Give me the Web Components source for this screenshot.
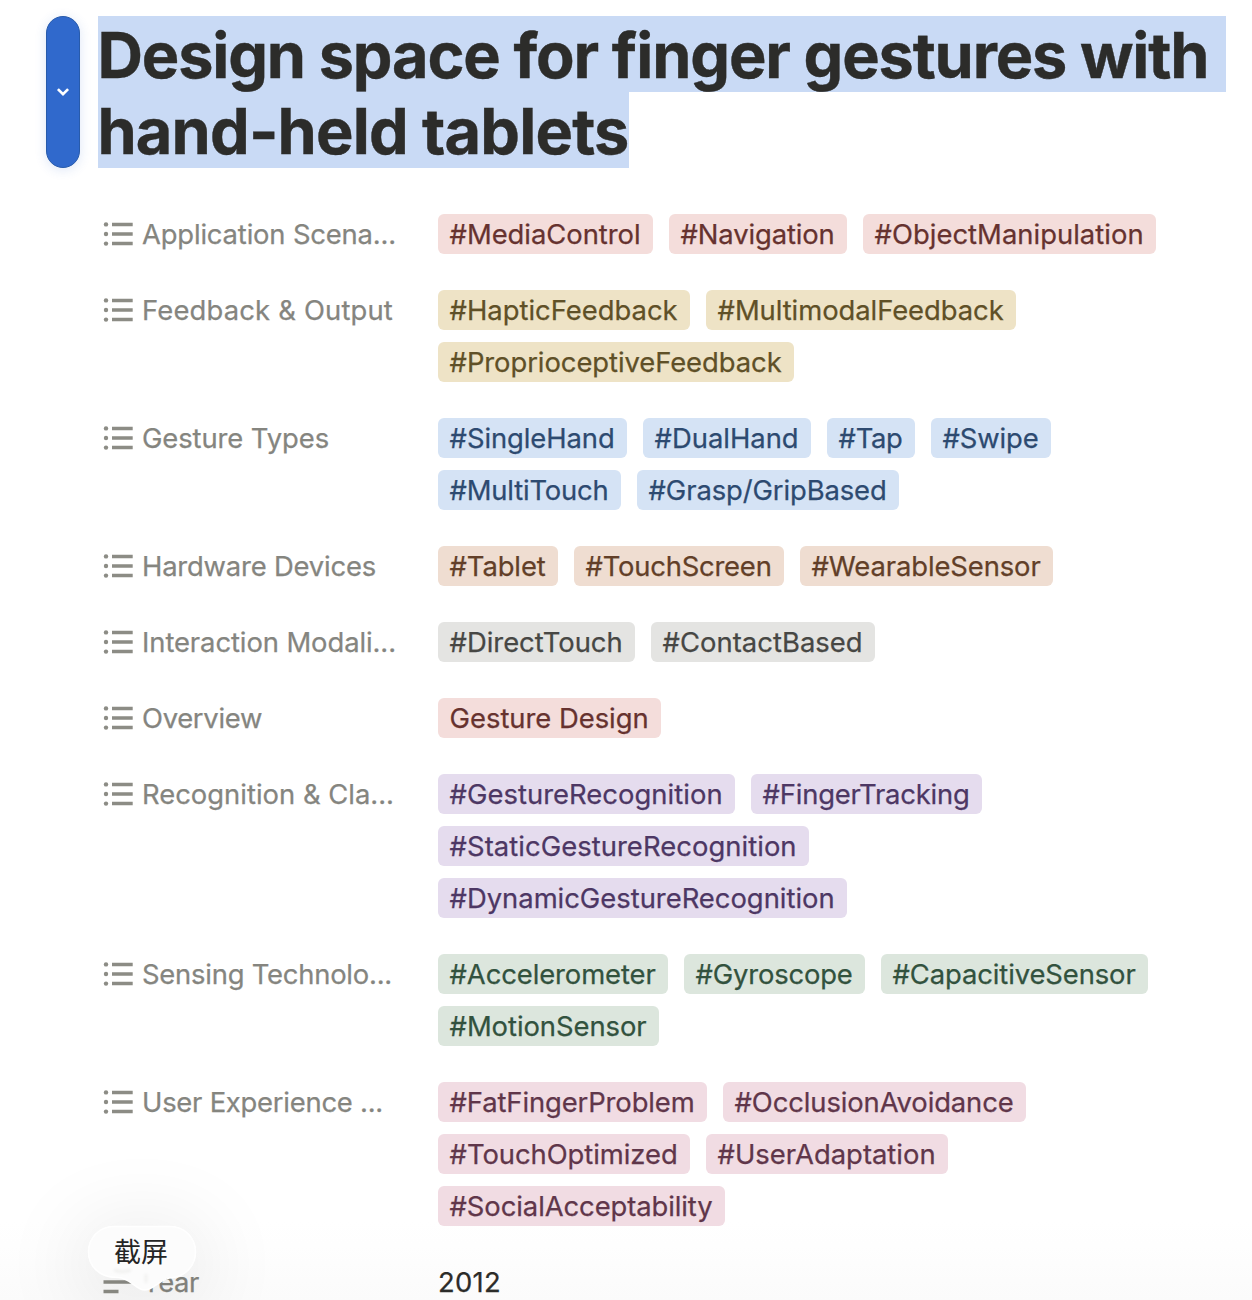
<!DOCTYPE html>
<html lang="en">
<head>
<meta charset="utf-8">
<title>Design space for finger gestures with hand-held tablets</title>
<style>
html,body{margin:0;height:1300px;overflow:hidden;background:#fff;font-family:Inter,"Noto Sans CJK SC",sans-serif}
</style>
</head>
<body>
<note-page></note-page>
<script>
// Distributes letter spacing so that a text run occupies its design width.
function fit(el, target){
  el.style.letterSpacing = '0px';
  const natural = el.getBoundingClientRect().width;
  el.style.letterSpacing = ((target - natural) / el.textContent.length) + 'px';
}
customElements.define('fit-text', class extends HTMLElement{
  connectedCallback(){
    const r = this.attachShadow({mode:'open'});
    r.innerHTML = `<style>:host{display:inline-block;white-space:pre}span{display:inline-block;font-kerning:normal}</style><span></span>`;
    const s = r.querySelector('span');
    s.textContent = this.getAttribute('text');
    fit(s, +this.getAttribute('width'));
  }
});
customElements.define('page-title', class extends HTMLElement{
  connectedCallback(){
    this.attachShadow({mode:'open'}).innerHTML = `<style>
:host{display:flex;gap:18px;height:152px}
.handle{box-sizing:border-box;width:34px;height:152px;border-radius:17px;background:#3069cc;border:1px solid #285bab;display:flex;align-items:center;justify-content:center;box-shadow:0 2px 12px rgba(48,105,204,.16)}
h1{margin:0;font-weight:700;font-size:63px;line-height:76px;color:#2c2c2a;-webkit-text-stroke:.4px;display:flex;flex-direction:column;align-items:flex-start}
.l{height:76px;background:#c9daf5;display:flex}
.l:first-child{width:1128px}.l:last-child{width:531px}
fit-text{height:76px;padding-top:1px;margin-left:-.6px;box-sizing:border-box}
</style><div class="handle"><svg width="14" height="10" viewBox="0 0 14 10"><path d="M1.900 2.100 7 7.100l5.100-5" fill="none" stroke="#fff" stroke-width="2.700"/></svg></div>
<h1><div class="l"><fit-text text="Design space for finger gestures with" width="1111"></fit-text></div><div class="l"><fit-text text="hand-held tablets" width="531"></fit-text></div></h1>`;
  }
});
customElements.define('note-tag', class extends HTMLElement{
  connectedCallback(){
    const w = +this.getAttribute('width');
    this.attachShadow({mode:'open'}).innerHTML = `<style>
:host{display:block;box-sizing:border-box;height:40px;padding:0 12px;border-radius:6px;line-height:40px;font-size:27.4px;width:${w}px}
fit-text{margin-left:-.4px}
</style><fit-text text="${this.getAttribute('text')}" width="${w-24}"></fit-text>`;
  }
});
customElements.define('property-row', class extends HTMLElement{
  connectedCallback(){
    const year = this.hasAttribute('plain');
    const icon = year
      ? '<path d="M-.5 13h29.200M-.5 22.600h15"/>'
      : '<path d="M8 3.400h20.700M8 13h20.700M8 22.600h20.700"/><g fill="#8c8c85" stroke="none"><circle cx="2" cy="3.400" r="2.200"/><circle cx="2" cy="13" r="2.200"/><circle cx="2" cy="22.600" r="2.200"/></g>';
    this.attachShadow({mode:'open'}).innerHTML = `<style>
:host{display:flex;align-items:flex-start;font-size:27.4px;font-weight:400;-webkit-text-stroke:.25px;line-height:40px}
.name{display:flex;align-items:center;width:334px;height:40px;color:#85857f;flex:none}
svg{width:30px;height:26px;margin-right:8px;flex:none;overflow:visible}
.values{display:flex;flex-wrap:wrap;gap:12px 16px;width:788px;color:#2c2c2a}
</style><div class="name"><svg viewBox="0 0 30 26" fill="none" stroke="#8c8c85" stroke-width="3.500">${icon}</svg><fit-text text="${this.getAttribute('name').replace('&','&amp;')}" width="${this.getAttribute('width')}"></fit-text></div><div class="values"><slot></slot></div>`;
  }
});
customElements.define('speech-tip', class extends HTMLElement{
  connectedCallback(){
    this.attachShadow({mode:'open'}).innerHTML = `<style>
:host{position:absolute;left:0;top:1110px;width:330px;height:190px;overflow:hidden}
.glow{position:absolute;left:88px;top:116px;width:108px;height:52px;border-radius:26px;box-shadow:0 12px 84px 14px rgba(0,0,0,.085)}
svg{position:absolute;left:80px;top:110px}
span{position:absolute;left:114px;top:121px;font:27px/40px "Noto Sans CJK SC",sans-serif;color:#252525}
</style><div class="glow"></div><svg width="130" height="80" viewBox="0 0 130 80"><defs><filter id="soft" x="-50%" y="-100%" width="200%" height="300%"><feGaussianBlur stdDeviation="1.600"/></filter></defs><path d="M34 6.500H90C105 6.500 115.500 18 115.500 32C115.500 45 106 56 93 57.500C80 58 74 70 64.500 70C56 70 51 58 38 57.500C19 57.500 8.500 46 8.500 32C8.500 18 19 6.500 34 6.500Z" fill="#fcfcfc" stroke="#fff" stroke-width="1.500"/><g filter="url(#soft)" fill="none" stroke="#efefed" stroke-width="2.500"><path d="M34 50q8 3 17 0M66 54v9"/></g></svg><span>截屏</span>`;
  }
});
const rows = [
 ['Application Scena...',254,'#f4dddb','#66322f',[['#MediaControl',215],['#Navigation',178],['#ObjectManipulation',293]]],
 ['Feedback & Output',251,'#eee3c6','#5f5027',[['#HapticFeedback',252],['#MultimodalFeedback',310],['#ProprioceptiveFeedback',356]]],
 ['Gesture Types',187,'#d5e3f5','#2d4a70',[['#SingleHand',189],['#DualHand',168],['#Tap',88],['#Swipe',120],['#MultiTouch',183],['#Grasp/GripBased',262]]],
 ['Hardware Devices',234,'#efddd1','#623f28',[['#Tablet',120],['#TouchScreen',210],['#WearableSensor',253]]],
 ['Interaction Modali...',254,'#e4e4e2','#474744',[['#DirectTouch',197],['#ContactBased',224]]],
 ['Overview',120,'#f4dddb','#66322f',[['Gesture Design',223]]],
 ['Recognition & Cla...',252,'#e5dcee','#4d3764',[['#GestureRecognition',297],['#FingerTracking',231],['#StaticGestureRecognition',371],['#DynamicGestureRecognition',409]]],
 ['Sensing Technolo...',250,'#dce6dd','#32523e',[['#Accelerometer',230],['#Gyroscope',181],['#CapacitiveSensor',267],['#MotionSensor',221]]],
 ['User Experience ...',241,'#f1dce3','#60364a',[['#FatFingerProblem',269],['#OcclusionAvoidance',303],['#TouchOptimized',252],['#UserAdaptation',242],['#SocialAcceptability',287]]]
];
customElements.define('note-page', class extends HTMLElement{
  connectedCallback(){
    const body = rows.map(([n,w,bg,fg,tags]) => `<property-row name="${n.replace('&','&amp;')}" width="${w}">${tags.map(([t,tw]) => `<note-tag style="background:${bg};color:${fg}" text="${t}" width="${tw}"></note-tag>`).join('')}</property-row>`).join('');
    this.attachShadow({mode:'open'}).innerHTML = `<style>
:host{display:block;box-sizing:border-box;position:relative;width:1252px;height:1300px;padding:16px 0 0 46px;overflow:hidden;background:linear-gradient(#fff 1220px,#fefefe 1245px,#fbfbfb 1300px)}
main{display:flex;flex-direction:column;gap:36px;padding:46px 0 0 58px}
</style><page-title></page-title><main>${body}<property-row name="Year" width="57" plain><fit-text text="2012" width="63"></fit-text></property-row></main><speech-tip></speech-tip>`;
  }
});
</script>
</body>
</html>
